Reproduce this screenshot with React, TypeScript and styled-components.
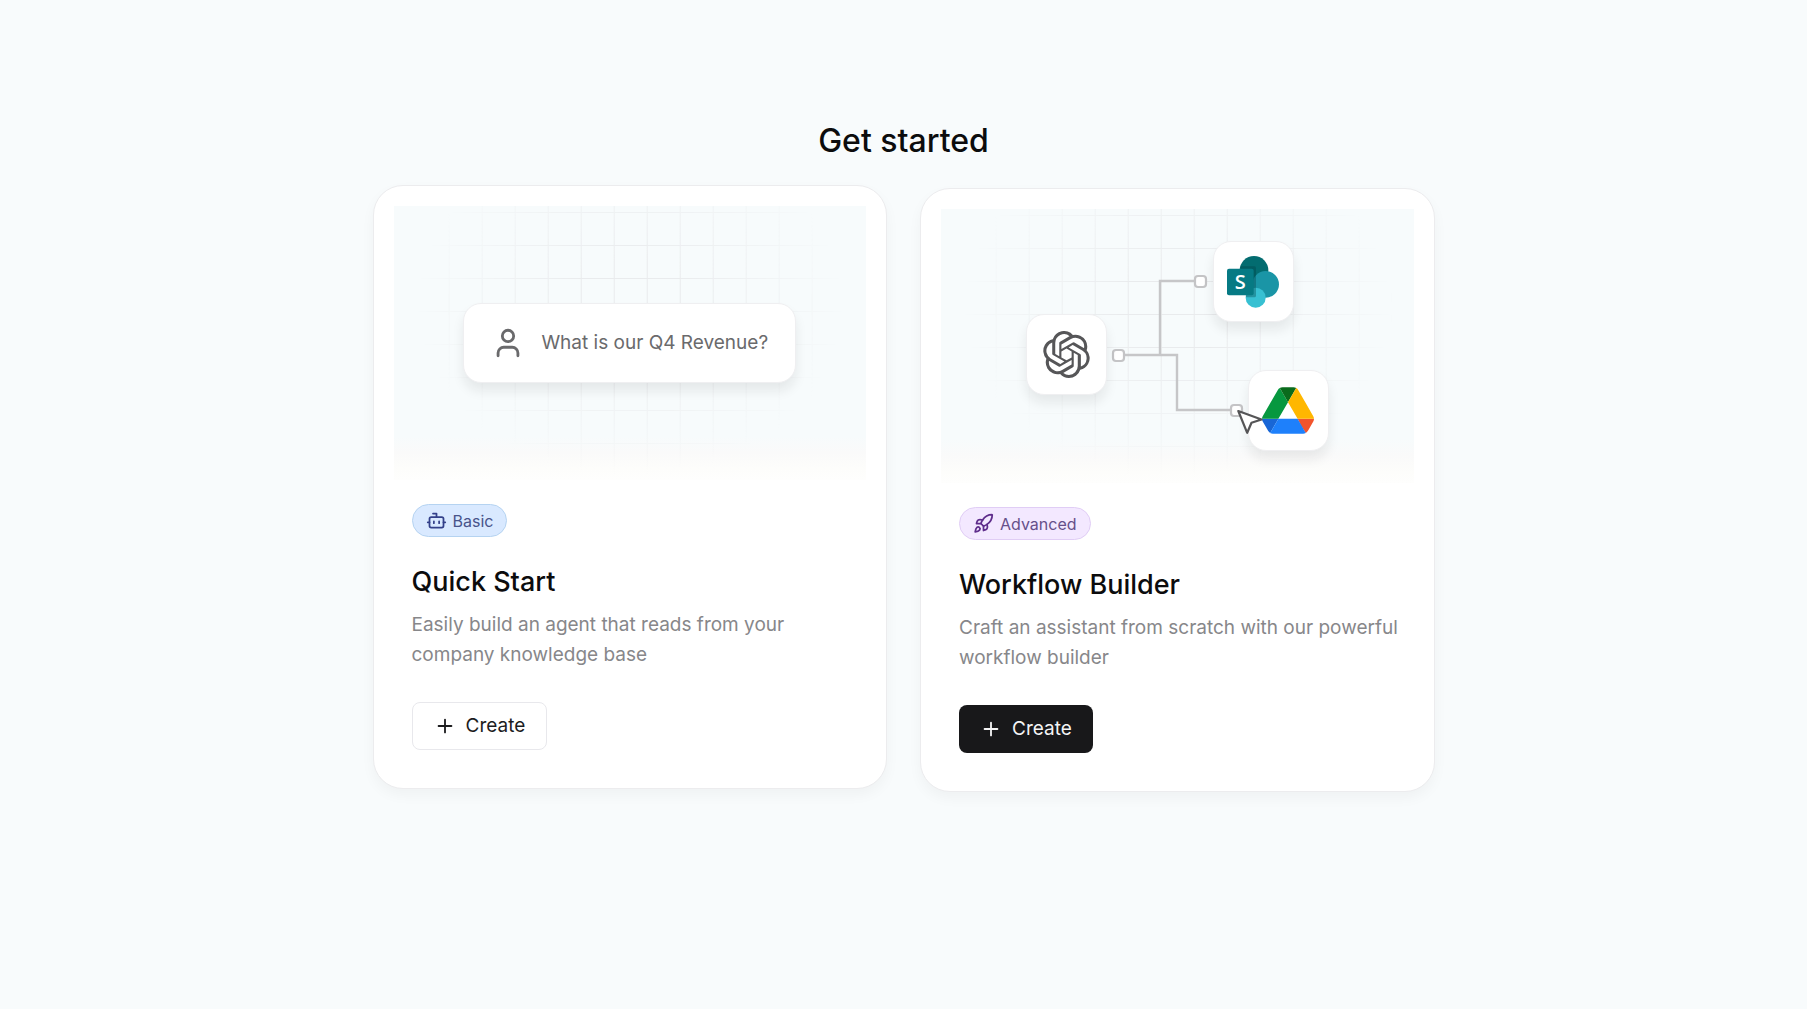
import React from "react";
import styled, { createGlobalStyle, css } from "styled-components";
import { Bot, Plus, Rocket, User } from "lucide-react";

const GlobalStyle = createGlobalStyle`
  *, *::before, *::after { box-sizing: border-box; }
  body {
    margin: 0;
    background: #f8fbfc;
    color: #0c0c0d;
    font-family: Inter, "Liberation Sans", sans-serif;
  }
`;

const Page = styled.main`
  display: flex;
  flex-direction: column;
  align-items: center;
  gap: 27px;
  min-height: 100vh;
  padding: 121px 32px;
`;

const Heading = styled.h1`
  margin: 0;
  font-size: 32px;
  line-height: 40px;
  font-weight: 500;
`;

const Cards = styled.div`
  display: grid;
  grid-template-columns: repeat(auto-fit, minmax(420px, 1fr));
  gap: 33px;
  width: 100%;
  max-width: 1062px;
`;

const Card = styled.article<{ $raised?: boolean }>`
  display: flex;
  flex-direction: column;
  padding: 20px;
  background: #fff;
  border: 1px solid #ececee;
  border-radius: 30px;
  box-shadow: 0 6px 14px rgba(20, 24, 30, 0.04);
  ${(p) => p.$raised && css`transform: translateY(-3px);`}
`;

const Stage = styled.div`
  position: relative;
  display: flex;
  align-items: center;
  justify-content: center;
  height: 274px;
  background: linear-gradient(#f7fbfc 84%, #fafafa 90%, #fdfdfb 96%, #fefefd);

  &::before {
    content: "";
    position: absolute;
    inset: 0;
    background-image: linear-gradient(#e9ebed 1px, transparent 1px),
      linear-gradient(90deg, #e9ebed 1px, transparent 1px);
    background-size: 33px 33px;
    background-position: center top 6px;
    mask-image: radial-gradient(ellipse 48% 66% at 50% 36%, #000 25%, transparent 95%);
  }
`;

const Prompt = styled.div`
  position: relative;
  display: flex;
  align-items: center;
  gap: 16px;
  padding: 24px 27px;
  background: #fff;
  border: 1px solid #efeff1;
  border-radius: 18px;
  box-shadow: 0 8px 12px rgba(20, 24, 30, 0.08);
  color: #6a6a6c;
  font-size: 19px;
  line-height: 30px;

  svg {
    margin: -2px 0;
  }
`;

const Diagram = styled.div`
  position: relative;
  width: 303px;
  height: 210px;
`;

const Wires = styled.svg`
  position: absolute;
  inset: 0;
  width: 100%;
  height: 100%;
  overflow: visible;
`;

const Node = styled.div<{ $x: number; $y: number }>`
  position: absolute;
  left: ${(p) => p.$x}px;
  top: ${(p) => p.$y}px;
  display: flex;
  align-items: center;
  justify-content: center;
  width: 81px;
  height: 81px;
  background: #fff;
  border: 1px solid #efeff1;
  border-radius: 18px;
  box-shadow: 0 8px 12px rgba(20, 24, 30, 0.08);
`;

const Cursor = styled.svg`
  position: absolute;
  left: 208px;
  top: 166px;
`;

const Body = styled.div`
  display: flex;
  flex-direction: column;
  align-items: flex-start;
  padding: 24px 0 18px 18px;
`;

const Badge = styled.span<{ $tone: "blue" | "purple" }>`
  display: inline-flex;
  align-items: center;
  gap: 6px;
  height: 33px;
  padding: 0 13px;
  border: 1px solid;
  border-radius: 17px;
  font-size: 16px;
  line-height: 24px;
  ${(p) =>
    p.$tone === "blue"
      ? css`
          background: #d9e9ff;
          border-color: #b5d3f1;
          color: #48548a;
          svg { color: #33408a; }
        `
      : css`
          background: #f3e8ff;
          border-color: #e0cdf5;
          color: #66508a;
          svg { color: #5f2d8c; }
        `}
`;

const Title = styled.h2`
  margin: 26px 0 0;
  font-size: 27px;
  line-height: 38px;
  font-weight: 500;
`;

const Description = styled.p`
  margin: 9px 0 0;
  color: #87878a;
  font-size: 19px;
  line-height: 30px;
`;

const CreateButton = styled.button<{ $solid?: boolean }>`
  display: inline-flex;
  align-items: center;
  gap: 10px;
  height: 48px;
  margin-top: 32px;
  padding: 0 21px;
  border: ${(p) => (p.$solid ? "none" : "1px solid #e8e8ec")};
  border-radius: 8px;
  background: ${(p) => (p.$solid ? "#18181a" : "#fff")};
  color: ${(p) => (p.$solid ? "#f4f4f5" : "#1c1c1e")};
  font: inherit;
  font-size: 19px;
  line-height: 24px;
  cursor: pointer;
`;

const OpenAiLogo = () => (
  <svg width="47" height="47" viewBox="0 0 24 24" fill="#565658" aria-hidden="true">
    <path d="M22.2819 9.8211a5.9847 5.9847 0 0 0-.5157-4.9108 6.0462 6.0462 0 0 0-6.5098-2.9A6.0651 6.0651 0 0 0 4.9807 4.1818a5.9847 5.9847 0 0 0-3.9977 2.9 6.0462 6.0462 0 0 0 .7427 7.0966 5.98 5.98 0 0 0 .511 4.9107 6.051 6.051 0 0 0 6.5146 2.9001A5.9847 5.9847 0 0 0 13.2599 24a6.0557 6.0557 0 0 0 5.7718-4.2058 5.9894 5.9894 0 0 0 3.9977-2.9001 6.0557 6.0557 0 0 0-.7475-7.0729zm-9.022 12.6081a4.4755 4.4755 0 0 1-2.8764-1.0408l.1419-.0804 4.7783-2.7582a.7948.7948 0 0 0 .3927-.6813v-6.7369l2.02 1.1686a.071.071 0 0 1 .038.052v5.5826a4.504 4.504 0 0 1-4.4945 4.4944zm-9.6607-4.1254a4.4708 4.4708 0 0 1-.5346-3.0137l.142.0852 4.783 2.7582a.7712.7712 0 0 0 .7806 0l5.8428-3.3685v2.3324a.0804.0804 0 0 1-.0332.0615L9.74 19.9502a4.4992 4.4992 0 0 1-6.1408-1.6464zM2.3408 7.8956a4.485 4.485 0 0 1 2.3655-1.9728V11.6a.7664.7664 0 0 0 .3879.6765l5.8144 3.3543-2.0201 1.1685a.0757.0757 0 0 1-.071 0l-4.8303-2.7865A4.504 4.504 0 0 1 2.3408 7.872zm16.5963 3.8558L13.1038 8.364 15.1192 7.2a.0757.0757 0 0 1 .071 0l4.8303 2.7913a4.4944 4.4944 0 0 1-.6765 8.1042v-5.6772a.79.79 0 0 0-.407-.667zm2.0107-3.0231l-.142-.0852-4.7735-2.7818a.7759.7759 0 0 0-.7854 0L9.409 9.2297V6.8974a.0662.0662 0 0 1 .0284-.0615l4.8303-2.7866a4.4992 4.4992 0 0 1 6.6802 4.66zM8.3065 12.863l-2.02-1.1638a.0804.0804 0 0 1-.038-.0567V6.0742a4.4992 4.4992 0 0 1 7.3757-3.4537l-.142.0805L8.704 5.459a.7948.7948 0 0 0-.3927.6813zm1.0976-2.3654l2.602-1.4998 2.6069 1.4998v2.9994l-2.5974 1.4997-2.6067-1.4997Z" />
  </svg>
);

const SharePointLogo = () => (
  <svg width="52" height="52" viewBox="0 0 156 156" aria-hidden="true">
    <circle cx="81" cy="43" r="43" fill="#036c70" />
    <circle cx="116" cy="85" r="40" fill="#1a95a6" />
    <circle cx="86" cy="125" r="30" fill="#37c0d2" />
    <path d="M40 31h42q5 0 5 5v83q0 5-5 5H57q-8-60-17-93z" fill="#033f44" opacity=".35" />
    <rect x="0" y="38" width="80" height="80" rx="6" fill="#067a84" />
    <text x="40" y="98" textAnchor="middle" fontFamily="Open Sans, sans-serif" fontWeight="600" fontSize="60" fill="#fff">
      S
    </text>
  </svg>
);

const DriveLogo = () => (
  <svg width="52" height="47" viewBox="0 0 87.3 78" aria-hidden="true">
    <path d="m6.6 66.85 3.85 6.65c.8 1.4 1.95 2.5 3.3 3.3l13.75-23.8h-27.5c0 1.55.4 3.1 1.2 4.5z" fill="#1866d6" />
    <path d="m43.65 25-13.75-23.8c-1.35.8-2.5 1.9-3.3 3.3l-25.4 44a9.06 9.06 0 0 0-1.2 4.5h27.5z" fill="#06983f" />
    <path d="m73.55 76.8c1.35-.8 2.5-1.9 3.3-3.3l1.6-2.75 7.65-13.25c.8-1.4 1.2-2.95 1.2-4.5h-27.502l5.852 11.5z" fill="#f2542d" />
    <path d="m43.65 25 13.75-23.8c-1.35-.8-2.9-1.2-4.5-1.2h-18.5c-1.6 0-3.15.45-4.5 1.2z" fill="#0a6b1c" />
    <path d="m59.8 53h-32.3l-13.75 23.8c1.35.8 2.9 1.2 4.5 1.2h50.8c1.6 0 3.15-.45 4.5-1.2z" fill="#1e80fb" />
    <path d="m73.4 26.5-12.7-22c-.8-1.4-1.95-2.5-3.3-3.3l-13.75 23.8 16.15 28h27.45c0-1.55-.4-3.1-1.2-4.5z" fill="#ffb700" />
  </svg>
);

const ports = [
  [92, 114],
  [174, 40],
  [210, 169],
];

function WorkflowDiagram() {
  return (
    <Diagram>
      <Wires aria-hidden="true">
        <path d="M92 114H151V169H210M134 114V40H174" fill="none" stroke="#c6c6c8" strokeWidth="2.4" />
        {ports.map(([x, y]) => (
          <rect key={x} x={x - 5} y={y - 5} width="11" height="11" rx="3" fill="#fff" stroke="#c4c4c6" strokeWidth="2.2" />
        ))}
      </Wires>
      <Node $x={0} $y={73}>
        <OpenAiLogo />
      </Node>
      <Node $x={187} $y={0}>
        <SharePointLogo />
      </Node>
      <Node $x={222} $y={129}>
        <DriveLogo />
      </Node>
      <Cursor width="32" height="32" viewBox="0 0 32 32" aria-hidden="true">
        <path d="M4.3 4 27.5 12.5 17.5 15.8 13.2 25.8Z" fill="#fff" stroke="#555557" strokeWidth="2.2" strokeLinejoin="round" />
      </Cursor>
    </Diagram>
  );
}

export default function App() {
  return (
    <>
      <GlobalStyle />
      <Page>
        <Heading>Get started</Heading>
        <Cards>
          <Card $raised>
            <Stage>
              <Prompt>
                <User size={34} strokeWidth={2} aria-hidden="true" />
                What is our Q4 Revenue?
              </Prompt>
            </Stage>
            <Body>
              <Badge $tone="blue">
                <Bot size={21} aria-hidden="true" />
                Basic
              </Badge>
              <Title>Quick Start</Title>
              <Description>Easily build an agent that reads from your company knowledge base</Description>
              <CreateButton type="button">
                <Plus size={22} aria-hidden="true" />
                Create
              </CreateButton>
            </Body>
          </Card>
          <Card>
            <Stage>
              <WorkflowDiagram />
            </Stage>
            <Body>
              <Badge $tone="purple">
                <Rocket size={21} aria-hidden="true" />
                Advanced
              </Badge>
              <Title>Workflow Builder</Title>
              <Description>Craft an assistant from scratch with our powerful workflow builder</Description>
              <CreateButton type="button" $solid>
                <Plus size={22} aria-hidden="true" />
                Create
              </CreateButton>
            </Body>
          </Card>
        </Cards>
      </Page>
    </>
  );
}
